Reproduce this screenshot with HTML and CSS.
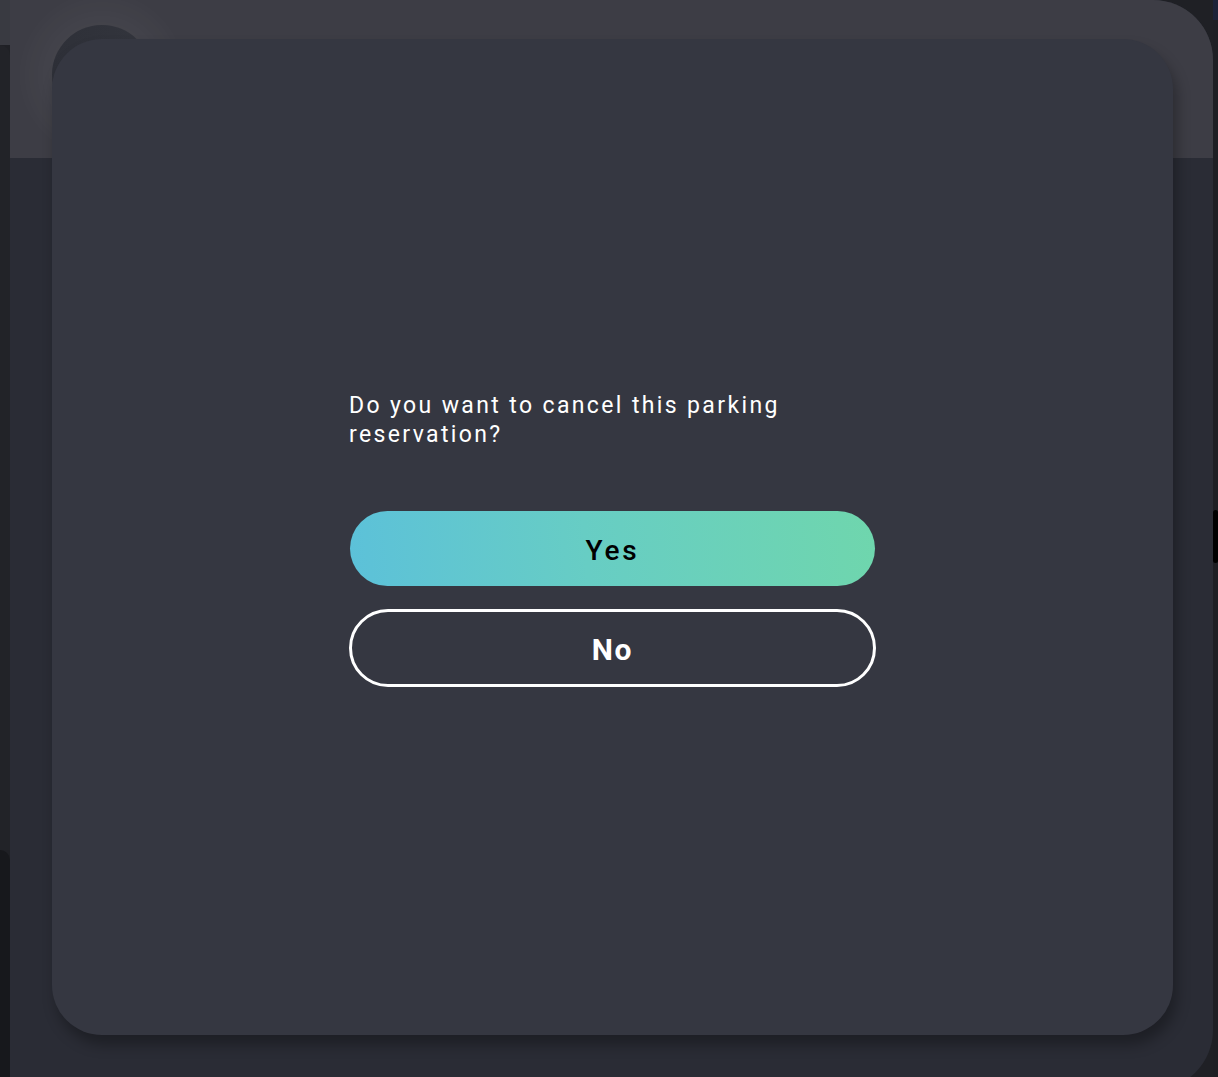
FILE: index.html
```html
<!DOCTYPE html>
<html lang="en">
<head>
    <meta charset="UTF-8">
    <meta name="viewport" content="width=device-width, initial-scale=1.0">
    <title>Cancel reservation</title>
    <link rel="stylesheet" href="styles.css">
</head>
<body>
    <div class="edge-left"><div class="edge-left-top"></div><div class="edge-left-mid"></div><div class="edge-left-low"></div></div>
    <div class="screen">
        <div class="screen-header">
            <div class="back-circle"></div>
        </div>
        <div class="screen-body"></div>
    </div>
    <div class="edge-right"><div class="edge-right-top"></div><div class="edge-right-bar"></div></div>

    <div class="modal">
        <div class="dialog">
            <p class="question">Do you want to cancel this parking reservation?</p>
            <button class="btn btn-yes">Yes</button>
            <button class="btn btn-no">No</button>
        </div>
    </div>
</body>
</html>
```

FILE: styles.css
```css
html, body { margin: 0; height: 100%; }
body { display: flex; height: 1077px; overflow: hidden; background: #1f2025; font-family: Roboto, "Liberation Sans", sans-serif; }

.edge-left { width: 10px; display: flex; flex-direction: column; }
.edge-left-top { height: 45px; background: #393a41; }
.edge-left-mid { flex: 1; background: #222328; border-top-right-radius: 10px; }
.edge-left-low { height: 227px; background: #17181c; border-top-right-radius: 12px; }

.screen { width: 1204px; height: 1090px; display: flex; flex-direction: column; border-radius: 0 60px 60px 0; overflow: hidden; background: #2a2c35; }
.screen-header { height: 158px; background: #3d3d45; padding: 25px 0 0 42px; box-sizing: border-box; overflow: hidden; }
.back-circle { width: 100px; height: 100px; border-radius: 50%; background: linear-gradient(90deg, #2e3038, #33353d); box-shadow: 0 0 30px 22px rgba(255,255,255,0.035); }
.screen-body { flex: 1; }

.edge-right { flex: 1; display: flex; flex-direction: column; background: #1e1f24; }
.edge-right-top { height: 20px; background: #1c2238; }
.edge-right-bar { width: 5px; height: 53px; margin: 490px 0 0 0; background: #000; border-radius: 3px; }

.modal { position: absolute; left: 52px; top: 39px; width: 1121px; height: 996px; border-radius: 50px; background: #353741; box-shadow: 4px 10px 14px rgba(0,0,0,0.3); display: flex; align-items: center; justify-content: center; }
.dialog { width: 527px; display: flex; flex-direction: column; margin-top: 3px; }
.question { margin: 0 0 62px 0; color: #fff; font-size: 23px; line-height: 29px; letter-spacing: 0.103em; }
.btn { font-family: Roboto, "Liberation Sans", sans-serif; font-size: 28px; font-weight: 500; letter-spacing: 0.1em; border-radius: 40px; padding: 4px 0 0 0; cursor: pointer; }
.btn-yes { width: 525px; height: 75px; margin: 0 auto 23px auto; border: none; color: #000; background: linear-gradient(85deg, #5cc1d9, #67cdc4 45%, #6fd6ad); }
.btn-no { width: 527px; height: 78px; border: 3px solid #fff; background: transparent; color: #fff; font-size: 30px; font-weight: 700; letter-spacing: 0.06em; }
```
